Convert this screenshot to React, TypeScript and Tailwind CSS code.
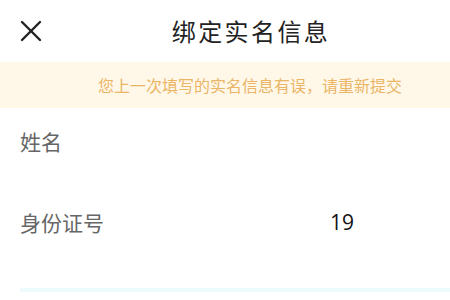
const font = { fontFamily: '"Noto Sans CJK SC", "Noto Sans", sans-serif' };

function CloseIcon() {
  return (
    <svg width="22" height="22" viewBox="0 0 22 22" fill="none" stroke="#222" strokeWidth="2.4" strokeLinecap="round">
      <path d="M2 2 L20 20" />
      <path d="M20 2 L2 20" />
    </svg>
  );
}

export default function App() {
  return (
    <div className="w-[450px] h-[300px] overflow-hidden bg-white flex flex-col" style={font}>
      <div className="relative h-[62px] flex items-center justify-center pl-[52px]">
        <button className="absolute left-[20px] top-[20px]" aria-label="关闭">
          <CloseIcon />
        </button>
        <h1 className="text-[24px] font-normal tracking-[2.4px] text-[#222] leading-none mt-[-1px]">
          绑定实名信息
        </h1>
      </div>

      <div className="h-[46px] bg-[#fff8e9] flex items-center pl-[98px]">
        <span className="text-[16px] text-[#ebb567] leading-none">
          您上一次填写的实名信息有误，请重新提交
        </span>
      </div>

      <div className="flex flex-col px-[20px]">
        <div className="h-[70px] flex items-center">
          <span className="text-[21px] text-[#666] leading-none mt-[-4px]">姓名</span>
        </div>
        <div className="h-[88px] flex items-center">
          <span className="w-[310px] text-[21px] text-[#666] leading-none">身份证号</span>
          <span className="text-[21px] text-[#111] leading-none" style={{ fontFamily: '"Open Sans", "Noto Sans", sans-serif' }}>
            19
          </span>
        </div>
        <div className="mt-[22px] h-[4px] bg-[#eefbfc] mr-[-20px]" />
      </div>
    </div>
  );
}
